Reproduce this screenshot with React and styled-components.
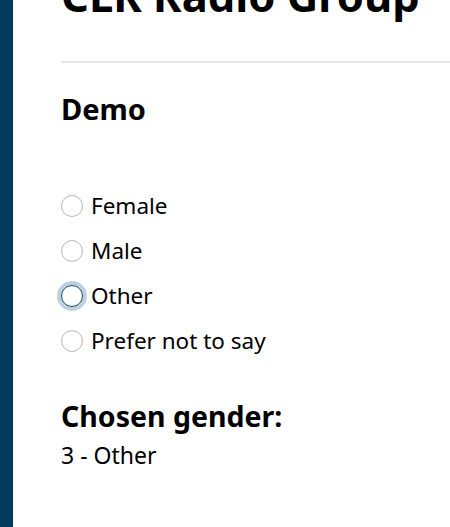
import React, { useState } from "react";
import styled, { createGlobalStyle } from "styled-components";

const Global = createGlobalStyle`
  html, body { margin: 0; padding: 0; background: #fff; }
  body { font-family: "Noto Sans", "Open Sans", sans-serif; color: #000; overflow: hidden; }
  * { box-sizing: border-box; }
`;

const Page = styled.div`
  display: flex;
  min-height: 527px;
`;

const Sidebar = styled.div`
  width: 13px;
  flex: none;
  background: #003a5d;
`;

const Main = styled.main`
  flex: 1;
  padding-left: 48px;
  overflow: hidden;
`;

const Title = styled.h1`
  margin: -31px 0 0;
  font-size: 43.5px;
  line-height: 52px;
  font-weight: 700;
  white-space: nowrap;
`;

const Divider = styled.hr`
  margin: 40px 0 0;
  border: none;
  height: 2px;
  background: #e6e6e6;
`;

const SectionTitle = styled.h2`
  margin: ${(p) => p.$mt}px 0 0;
  font-size: ${(p) => p.$size}px;
  line-height: 36px;
  font-weight: 700;
`;

const Group = styled.div`
  display: flex;
  flex-direction: column;
  margin-top: 56px;
`;

const Row = styled.label`
  display: flex;
  align-items: center;
  height: 45px;
  font-size: 22.5px;
  line-height: 28px;
  cursor: pointer;
`;

const Circle = styled.span`
  width: 22px;
  height: 22px;
  margin-right: 8px;
  border-radius: 50%;
  border: 1px solid ${(p) => (p.$focus ? "#1f4e6b" : "#b9b9b9")};
  box-shadow: ${(p) => (p.$focus ? "0 0 0 4px #bcd0e0" : "none")};
  background: #fff;
  flex: none;
`;

const Value = styled.div`
  font-size: 23px;
  line-height: 28px;
  margin-top: 7px;
`;

const options = ["Female", "Male", "Other", "Prefer not to say"];

export default function App() {
  const [chosen, setChosen] = useState(2);
  return (
    <>
      <Global />
      <Page>
        <Sidebar />
        <Main>
          <Title>CLR Radio Group</Title>
          <Divider />
          <SectionTitle $mt={28} $size={29}>Demo</SectionTitle>
          <Group>
            {options.map((o, i) => (
              <Row key={o} onClick={() => setChosen(i)}>
                <Circle $focus={chosen === i} />
                {o}
              </Row>
            ))}
          </Group>
          <SectionTitle $mt={35} $size={28.5}>Chosen gender:</SectionTitle>
          <Value>
            {chosen + 1} - {options[chosen]}
          </Value>
        </Main>
      </Page>
    </>
  );
}
